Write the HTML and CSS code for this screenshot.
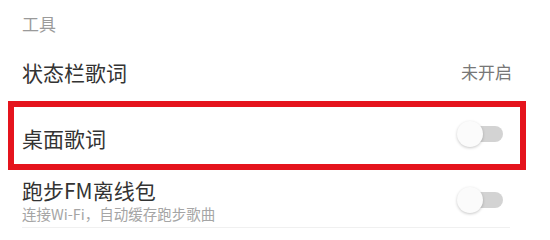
FILE: index.html
```html
<!DOCTYPE html>
<html lang="zh-CN">
<head>
<meta charset="utf-8">
<link rel="stylesheet" href="styles.css">
</head>
<body>
<div class="page">
  <div class="section-title">工具</div>
  <div class="row row-first">
    <span class="row-label">状态栏歌词</span>
    <span class="row-value">未开启</span>
  </div>
  <div class="highlight">
    <div class="row row-boxed">
      <span class="row-label">桌面歌词</span>
      <span class="toggle"><span class="track"></span><span class="knob"></span></span>
    </div>
  </div>
  <div class="row row-sub">
    <div class="label-group">
      <div class="row-label">跑步FM离线包</div>
      <div class="row-desc">连接Wi-Fi，自动缓存跑步歌曲</div>
    </div>
    <span class="toggle"><span class="track"></span><span class="knob"></span></span>
  </div>
  <div class="divider"></div>
</div>
</body>
</html>
```

FILE: styles.css
```css
html, body {
  margin: 0;
  padding: 0;
  background: #ffffff;
}
.page {
  width: 550px;
  height: 236px;
  overflow: hidden;
  font-family: "Noto Sans CJK SC", "Noto Sans", sans-serif;
  display: flex;
  flex-direction: column;
}
.section-title {
  font-size: 17px;
  line-height: 24px;
  color: #9a9a9a;
  padding: 12px 0 0 22px;
  height: 24px;
}
.row {
  display: flex;
  align-items: center;
  justify-content: space-between;
}
.row-label {
  font-size: 21px;
  line-height: 24px;
  color: #333333;
}
.row-first {
  height: 58px;
  padding: 7px 38px 0 22px;
}
.row-value {
  font-size: 17px;
  line-height: 24px;
  color: #777777;
}
.highlight {
  margin-left: 8px;
  width: 506px;
  height: 57px;
  border: 6px solid #e5141d;
  display: flex;
}
.row-boxed {
  flex: 1;
  padding: 0 17px 0 8px;
}
.row-boxed .row-label {
  position: relative;
  top: 2px;
}
.row-sub {
  padding: 8px 47px 0 22px;
}
.label-group {
  display: flex;
  flex-direction: column;
}
.row-sub .row-label {
  line-height: 22px;
  margin-top: 1px;
}
.row-desc {
  font-size: 14.5px;
  line-height: 17px;
  margin-top: 4px;
  color: #a5a5a5;
}
.toggle {
  position: relative;
  width: 46px;
  height: 26px;
  flex: none;
}
.row-boxed .toggle {
  top: -2px;
}
.track {
  position: absolute;
  left: 6px;
  right: 0;
  top: 5px;
  height: 16px;
  border-radius: 8px;
  background: #d3d3d3;
}
.knob {
  position: absolute;
  left: 0;
  top: 0;
  width: 26px;
  height: 26px;
  border-radius: 50%;
  background: #fbfbfb;
  box-shadow: 0 1px 3px rgba(0, 0, 0, 0.22);
}
.divider {
  margin: 5px 40px 0 22px;
  height: 1px;
  background: #f0f0f0;
}
```
